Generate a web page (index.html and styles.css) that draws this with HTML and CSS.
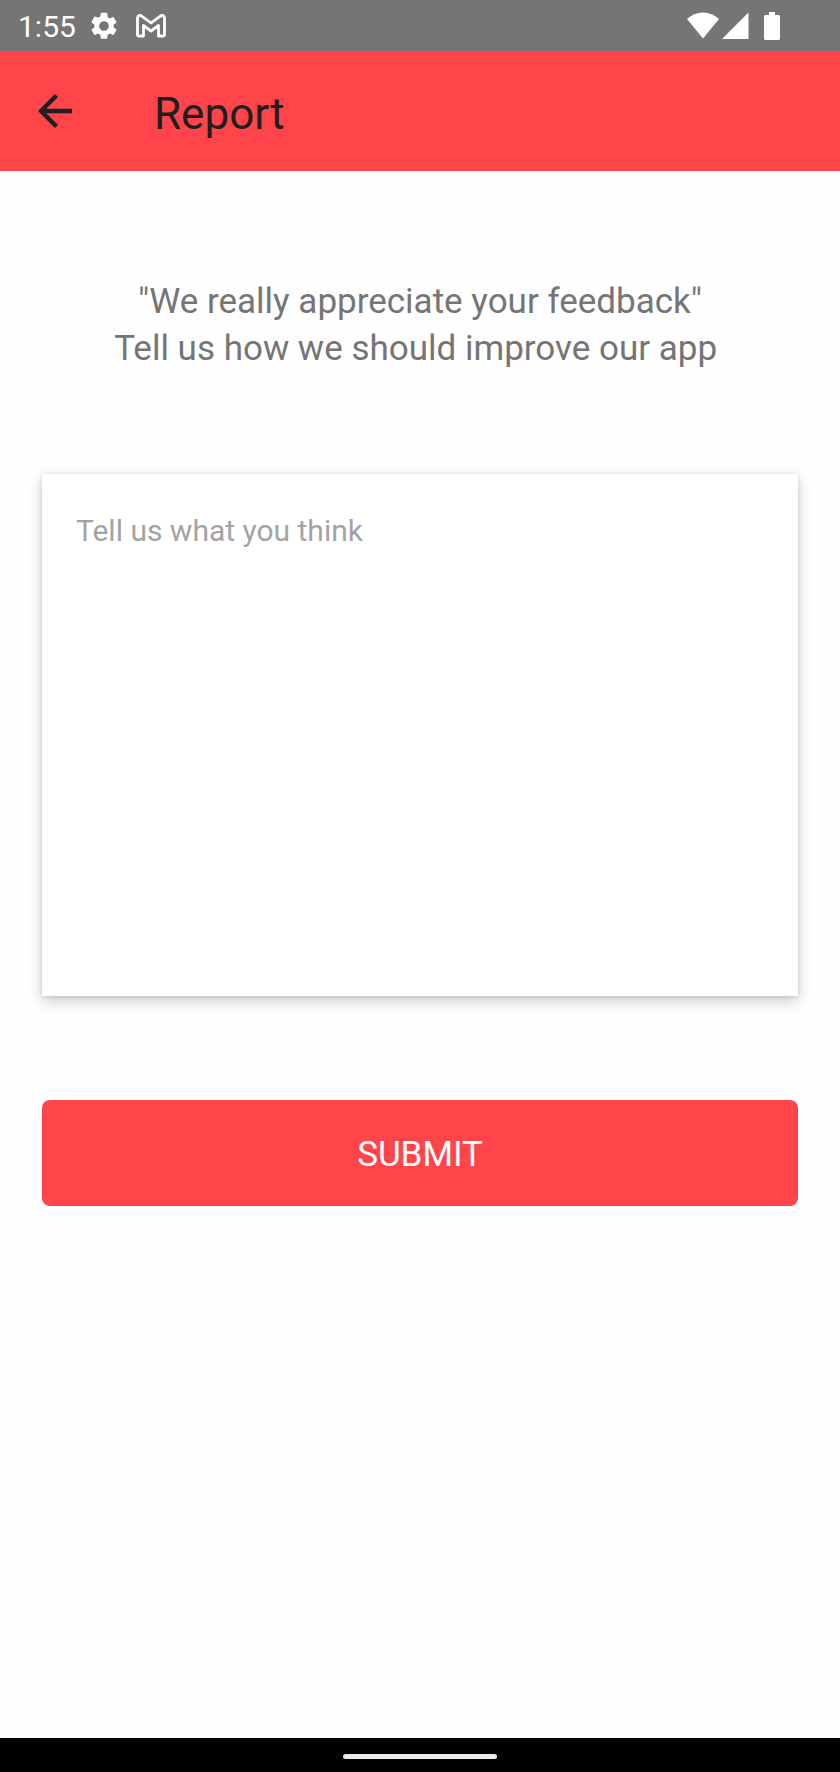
FILE: index.html
```html
<!DOCTYPE html>
<html lang="en">
<head>
<meta charset="utf-8">
<meta name="viewport" content="width=device-width, initial-scale=1">
<title>Report</title>
<link rel="stylesheet" href="styles.css">
</head>
<body>
<div class="screen">
  <div class="status-bar">
    <div class="status-left">
      <span class="clock">1:55</span>
      <svg class="icon-gear" viewBox="0 0 24 24" aria-hidden="true"><path fill="currentColor" d="M19.14 12.94c.04-.3.06-.61.06-.94 0-.32-.02-.64-.07-.94l2.03-1.58c.18-.14.23-.41.12-.61l-1.92-3.32c-.12-.22-.37-.29-.59-.22l-2.39.96c-.5-.38-1.03-.7-1.62-.94L14.4 2.41c-.04-.24-.24-.41-.48-.41h-3.84c-.24 0-.43.17-.47.41l-.36 2.54c-.59.24-1.13.57-1.62.94l-2.39-.96c-.22-.08-.47 0-.59.22L2.74 8.87c-.12.21-.08.47.12.61l2.03 1.58c-.05.3-.09.63-.09.94s.02.64.07.94l-2.03 1.58c-.18.14-.23.41-.12.61l1.92 3.32c.12.22.37.29.59.22l2.39-.96c.5.38 1.03.7 1.62.94l.36 2.54c.05.24.24.41.48.41h3.84c.24 0 .44-.17.47-.41l.36-2.54c.59-.24 1.13-.56 1.62-.94l2.39.96c.22.08.47 0 .59-.22l1.92-3.32c.12-.22.07-.47-.12-.61l-2.01-1.58zM12 15.6c-1.98 0-3.600-1.620-3.600-3.600s1.620-3.600 3.600-3.600 3.600 1.620 3.600 3.600-1.620 3.600-3.600 3.600z"/></svg>
      <svg class="icon-mail" viewBox="0 0 30 24" aria-hidden="true"><path fill="none" stroke="currentColor" stroke-width="2.800" stroke-linejoin="round" d="M1.500 4v16.500q0 1.500 1.500 1.500H7.500V11.500L15 17l7.500-5.500V22H27q1.500 0 1.500-1.500V4Q28.500 1.500 26 1.500 25 1.500 24 2.300L15 9 6 2.300Q5 1.500 4 1.500 1.500 1.500 1.500 4Z"/></svg>
    </div>
    <div class="status-right">
      <svg class="icon-wifi" viewBox="0 0 32 28" aria-hidden="true"><path fill="currentColor" d="M16 26.500 0 7Q7 .5 16 .5T32 7Z"/></svg>
      <svg class="icon-signal" viewBox="0 0 27 28" aria-hidden="true"><path fill="currentColor" d="M0 27 26.500.5V27Z"/></svg>
      <svg class="icon-battery" viewBox="0 0 16 28" aria-hidden="true"><path fill="currentColor" d="M5 0h6v3h3.500Q16 3 16 4.500v22q0 1.500-1.500 1.500h-13Q0 28 0 26.500v-22Q0 3 1.500 3H5Z"/></svg>
    </div>
  </div>
  <header class="app-bar">
    <button class="back" type="button" aria-label="Back">
      <svg class="icon-back" viewBox="0 0 34 34" aria-hidden="true"><path fill="none" stroke="currentColor" stroke-width="4.400" d="M34 17H3M18.500 1.500 3 17l15.500 15.500"/></svg>
    </button>
    <h1 class="title">Report</h1>
  </header>
  <main class="content">
    <p class="intro">"We really appreciate your feedback"<br>Tell us how we should improve our app&nbsp;</p>
    <form class="form">
      <textarea class="feedback" aria-label="Feedback" placeholder="Tell us what you think"></textarea>
      <button class="submit" type="button">SUBMIT</button>
    </form>
  </main>
  <div class="nav-bar"><div class="handle"></div></div>
</div>
</body>
</html>
```
FILE: styles.css
```css
* {
  box-sizing: border-box;
}

body {
  margin: 0;
  background: #fefefe;
  font-family: Roboto, sans-serif;
}

.screen {
  display: flex;
  flex-direction: column;
  min-height: 100vh;
}

.status-bar {
  display: flex;
  justify-content: space-between;
  align-items: center;
  height: 51px;
  padding: 0 60px 0 18px;
  background: #757575;
  color: #fff;
}

.status-left,
.status-right {
  display: flex;
  align-items: center;
}

.clock {
  margin-right: 12px;
  padding-top: 2px;
  font-size: 30px;
  line-height: 48px;
}

.icon-gear {
  width: 32px;
  height: 32px;
  margin-right: 16px;
}

.icon-mail {
  width: 30px;
  height: 24px;
}

.icon-wifi {
  width: 32px;
  height: 28px;
  margin-right: 3px;
}

.icon-signal {
  width: 27px;
  height: 28px;
  margin-right: 15px;
}

.icon-battery {
  width: 16px;
  height: 28px;
}

.app-bar {
  display: flex;
  align-items: center;
  height: 120px;
  padding: 0 38px;
  background: #ff444a;
  color: #1f1f1f;
}

.back {
  display: flex;
  margin: 0 82px 0 0;
  padding: 0;
  border: 0;
  background: none;
  color: inherit;
}

.icon-back {
  width: 34px;
  height: 34px;
}

.title {
  margin: 0;
  padding-top: 5px;
  font-size: 44px;
  font-weight: 400;
  line-height: 52px;
}

.content {
  flex: 1;
  padding: 107px 42px 0;
}

.intro {
  margin: 0 0 102px;
  color: #757575;
  font-size: 35px;
  line-height: 47px;
  text-align: center;
}

.form {
  display: flex;
  flex-direction: column;
  gap: 104px;
}

.feedback {
  display: block;
  width: 100%;
  height: 522px;
  padding: 38px 34px;
  border: 0;
  outline: 0;
  resize: none;
  background: #fff;
  box-shadow: 0 5px 14px rgba(0, 0, 0, 0.2), 0 1px 4px rgba(0, 0, 0, 0.1);
  color: #212121;
  font-family: inherit;
  font-size: 30px;
  line-height: 38px;
}

.feedback::placeholder {
  color: #a3a3a3;
  opacity: 1;
}

.submit {
  width: 100%;
  height: 106px;
  padding: 4px 0 0;
  border: 0;
  border-radius: 8px;
  background: #ff444a;
  color: #fff;
  font-family: inherit;
  font-size: 35px;
  line-height: 48px;
}

.nav-bar {
  display: flex;
  justify-content: center;
  align-items: center;
  height: 34px;
  padding-top: 3px;
  background: #000;
}

.handle {
  width: 154px;
  height: 5px;
  border-radius: 3px;
  background: #ebebeb;
}
```
